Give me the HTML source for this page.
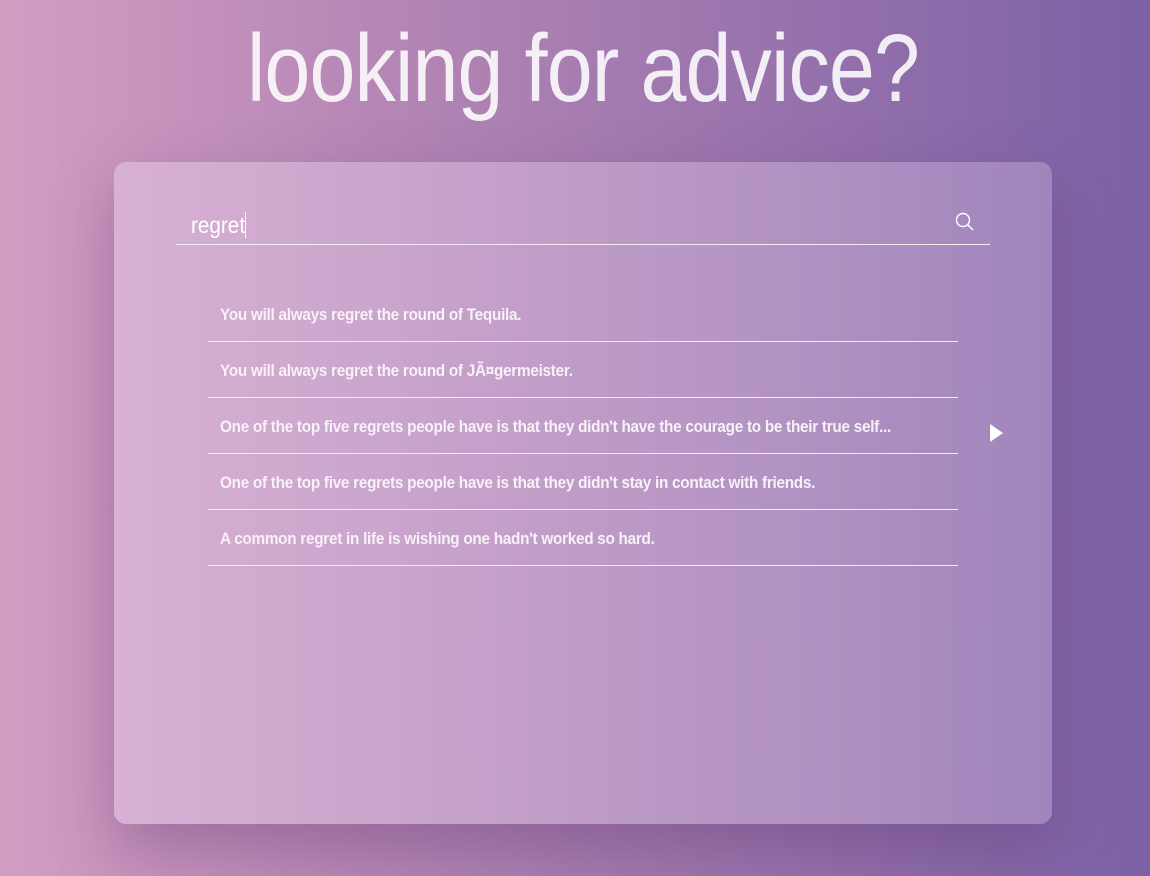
<!DOCTYPE html>
<html><head><meta charset="utf-8"><style>
html,body{margin:0;padding:0;width:1150px;height:876px;overflow:hidden}
body{background:linear-gradient(90deg,#d29dc3 0%,#b888b6 30%,#9a74ad 65%,#7c61a7 100%);font-family:"Liberation Sans",sans-serif;color:#fff;position:relative}
h1{position:absolute;top:14px;left:0;width:1166px;text-align:center;margin:0;font-weight:100;font-size:96px;letter-spacing:-1px;color:rgba(255,255,255,0.88);transform:scaleX(0.86);transform-origin:583px 0;line-height:110px}
.card{position:absolute;left:114px;top:162px;width:938px;height:662px;border-radius:12px;background:linear-gradient(90deg,rgba(225,195,225,0.6),rgba(195,170,212,0.45));box-shadow:0 25px 60px rgba(90,50,100,0.35)}
.search{position:absolute;left:62px;top:44px;width:814px;height:38px;border-bottom:1px solid #f3ecf4}
.search span{position:absolute;left:15px;top:6px;font-size:23px;color:#fff;transform:scaleX(0.9);transform-origin:0 0}
.search span:after{content:"";display:inline-block;width:1px;height:26px;background:#fff;vertical-align:-5px}
.search svg{position:absolute;right:14px;top:5px}
ul{list-style:none;margin:0;padding:0;position:absolute;left:94px;top:124px;width:750px}
li{height:55px;border-bottom:1px solid #f1eaf4;font-size:17px;line-height:58px;padding-left:12px;color:#f8f2f8;white-space:nowrap;font-weight:bold}
li span{display:inline-block;transform:scaleX(0.9);transform-origin:0 0;letter-spacing:-0.3px}
.play{position:absolute;left:876px;top:262px;width:0;height:0;border-left:13px solid #fff;border-top:9px solid transparent;border-bottom:9px solid transparent}
</style></head><body>
<h1>looking for advice?</h1>
<div class="card">
<div class="search"><span>regret</span>
<svg width="22" height="22" viewBox="0 0 22 22"><circle cx="9" cy="9" r="6.5" fill="none" stroke="#fff" stroke-width="1.5"/><line x1="13.8" y1="13.8" x2="19" y2="19" stroke="#fff" stroke-width="1.5"/></svg></div>
<ul>
<li><span>You will always regret the round of Tequila.</span></li>
<li><span>You will always regret the round of JÃ¤germeister.</span></li>
<li><span>One of the top five regrets people have is that they didn't have the courage to be their true self...</span></li>
<li><span>One of the top five regrets people have is that they didn't stay in contact with friends.</span></li>
<li><span>A common regret in life is wishing one hadn't worked so hard.</span></li>
</ul>
<div class="play"></div>
</div>
</body></html>
